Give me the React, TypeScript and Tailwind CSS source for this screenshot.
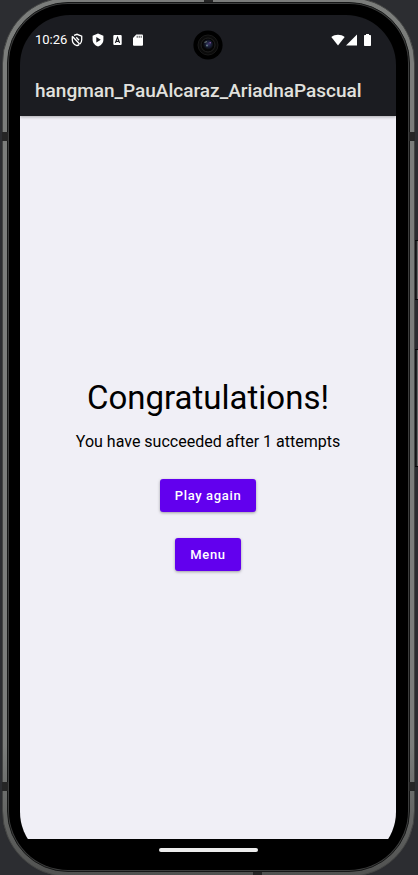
import React from 'react';

function StatusBar() {
  return (
    <div className="flex h-[50px] items-center justify-between pl-[15px] pr-[25px] text-white">
      <div className="flex items-center">
        <time className="text-[13px] leading-4">10:26</time>
        <svg className="ml-1" width="12" height="14" viewBox="0 0 12 14" fill="none" stroke="currentColor" strokeWidth="1.3" aria-hidden="true">
          <path d="M3 2.400 6 1.300l4.700 1.800v3.600c0 1.700-.6 3.200-1.700 4.300M1.300 3.300v3.400c0 2.800 1.900 5 4.700 5.900.8-.2 1.500-.6 2.100-1" />
          <path d="M1.300 3.200 8.800 11.300M5.300 4.300 8 7.200" />
        </svg>
        <svg className="ml-[9px]" width="12" height="14" viewBox="0 0 12 14" aria-hidden="true">
          <path fill="currentColor" d="M6 .6 11.400 2.700v4c0 3-2.200 5.700-5.400 6.700C2.800 12.400.6 9.700.6 6.700v-4z" />
          <path fill="#1b1c21" d="M4.300 4.100 8.800 6.700 4.300 9.400z" />
        </svg>
        <svg className="ml-[9px]" width="9" height="12" viewBox="0 0 9 12" aria-hidden="true">
          <rect y="1" x=".3" width="8.400" height="10" rx="1" fill="currentColor" />
          <path fill="none" stroke="#1b1c21" strokeWidth="1.200" d="M2.400 8.900 4.500 3.400 6.600 8.900M3.100 7.300h2.800" />
        </svg>
        <svg className="ml-[11px]" width="10" height="12" viewBox="0 0 10 12" aria-hidden="true">
          <path fill="currentColor" d="M3.300.5H9a1 1 0 0 1 1 1v9.200a1 1 0 0 1-1 1H1a1 1 0 0 1-1-1V4z" />
          <path stroke="#1b1c21" strokeWidth=".8" d="M4.200 1.800v2M6.200 1.800v2M8.200 1.800v2" />
        </svg>
      </div>
      <div className="flex items-center">
        <svg width="14" height="12" viewBox="0 0 14 12" aria-hidden="true">
          <path fill="currentColor" d="M.3 3C4 .1 10 .1 13.700 3L7 11.500z" />
        </svg>
        <svg className="ml-px" width="11" height="12" viewBox="0 0 11 12" aria-hidden="true">
          <path fill="currentColor" d="M11 .5v11H0z" />
        </svg>
        <svg className="ml-[7px]" width="7" height="12" viewBox="0 0 7 12" aria-hidden="true">
          <path fill="currentColor" d="M2 0h3v1h1.200q.8 0 .8.800v9.400q0 .8-.8.800H.8q-.8 0-.8-.8V1.800Q0 1 .8 1H2z" />
        </svg>
      </div>
    </div>
  );
}

function Camera() {
  return (
    <svg className="absolute left-1/2 top-[15px] z-20 -translate-x-1/2" width="30" height="30" viewBox="0 0 30 30" aria-hidden="true">
      <defs>
        <radialGradient id="lens" cx=".55" cy=".45" r=".55">
          <stop offset="0" stopColor="#3b3768" />
          <stop offset=".5" stopColor="#191f38" />
          <stop offset="1" stopColor="#08090b" />
        </radialGradient>
      </defs>
      <circle cx="15" cy="15" r="14.600" fill="#000" />
      <circle cx="15" cy="15" r="10" fill="#0b0b0b" stroke="#191919" />
      <circle cx="15" cy="15" r="7" fill="#050505" stroke="#202020" />
      <circle cx="15" cy="14.500" r="5" fill="url(#lens)" />
      <path stroke="#65706f" strokeWidth="1.200" d="M11.500 12.500 14 11.500" />
      <circle cx="17.200" cy="12.800" r=".8" fill="#8d55a8" />
      <circle cx="14" cy="15.500" r="1" fill="#69808a" />
    </svg>
  );
}

const buttonStyle =
  'h-[33px] rounded-[3px] bg-[#6200ee] px-[15px] pt-[2px] text-[13px] leading-4 font-medium tracking-wider text-white shadow-[0_1px_3px_rgba(0,0,0,0.35)]';

export default function App() {
  return (
    <div className="relative flex min-h-screen flex-col overflow-hidden bg-[#2c2d31] pl-[2px] pr-[3px] font-['Roboto',sans-serif]">
      <div className="absolute right-0 top-[240px] h-[60px] w-[3px] border-y border-[#08080a] bg-gradient-to-r from-[#151517] from-40% to-[#858585]" />
      <div className="absolute right-0 top-[349px] h-[118px] w-[3px] border-y border-[#08080a] bg-gradient-to-r from-[#151517] from-40% to-[#858585]" />

      <div className="relative -mt-[3px] -mb-[2px] flex flex-1 flex-col rounded-[66px] border border-[#444544] bg-gradient-to-b from-[#7b7d7b] via-[#7b7d7b] via-85% to-[#505150] p-1">
        <div className="absolute -left-px top-[134px] h-[9px] w-[6px] bg-[#252525]" />
        <div className="absolute -right-px top-[134px] h-[9px] w-[6px] bg-[#252525]" />
        <div className="absolute -left-px bottom-[85px] h-[9px] w-[6px] bg-[#252525]" />
        <div className="absolute -right-px bottom-[85px] h-[9px] w-[6px] bg-[#252525]" />
        <div className="absolute left-[201px] top-0 h-1 w-[9px] bg-[#252525]" />
        <div className="absolute bottom-0 left-[250px] h-1 w-[9px] bg-[#252525]" />

        <div className="flex flex-1 flex-col rounded-[61px] border border-[#161717] bg-[#3c3d3d] p-px">
          <div className="flex flex-1 flex-col rounded-[59px] bg-black pt-[11px] pr-3 pb-2 pl-[11px]">
            <div className="relative flex flex-1 flex-col overflow-hidden rounded-[50px] bg-black">
              <header className="z-10 bg-[#1b1c21] shadow-[0_1px_3px_rgba(0,0,0,0.3)]">
                <StatusBar />
                <div className="flex h-[51px] items-center px-[15px]">
                  <h1 className="text-[19px] leading-6 font-medium text-[#e1e1de]">hangman_PauAlcaraz_AriadnaPascual</h1>
                </div>
              </header>
              <Camera />
              <main className="flex flex-1 flex-col items-center justify-center bg-[#f0eff6] pb-[7px]">
                <h2 className="text-[33px] leading-10 text-black">Congratulations!</h2>
                <p className="mt-3 text-[16px] leading-6 text-black">You have succeeded after 1 attempts</p>
                <button type="button" className={`mt-[25px] ${buttonStyle}`}>Play again</button>
                <button type="button" className={`mt-[26px] ${buttonStyle}`}>Menu</button>
              </main>
              <footer className="flex h-[23px] justify-center bg-black pt-[9px]">
                <div className="h-1 w-[99px] rounded-full bg-[#ececec]" />
              </footer>
            </div>
          </div>
        </div>
      </div>
    </div>
  );
}
